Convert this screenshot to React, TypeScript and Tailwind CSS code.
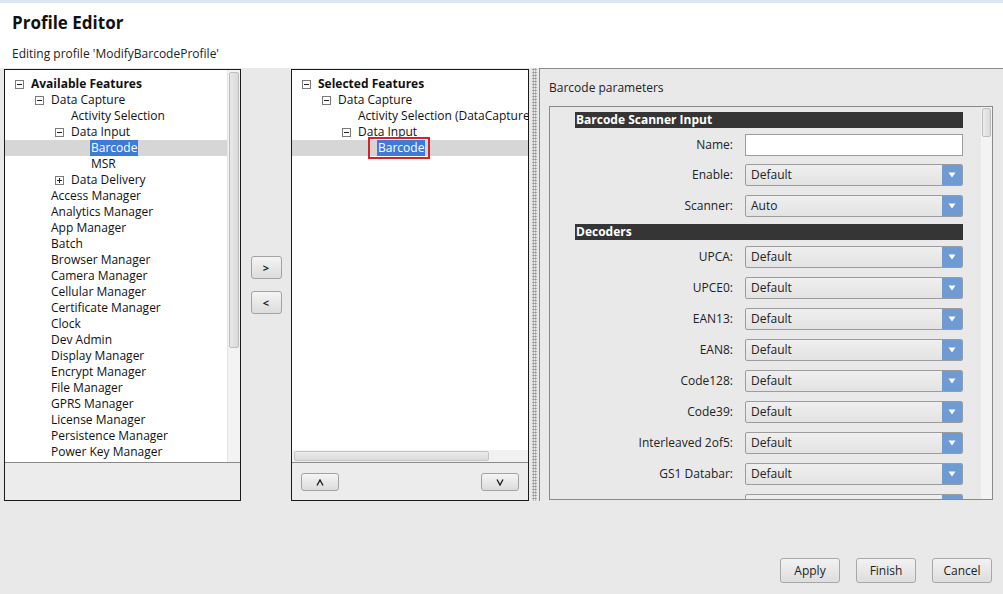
import React from 'react';

type Row = {
    label: string;
    level: number;
    toggle?: 'minus' | 'plus';
    bold?: boolean;
    selected?: boolean;
};

const availableRows: Row[] = [
    { label: 'Available Features', level: 0, toggle: 'minus', bold: true },
    { label: 'Data Capture', level: 1, toggle: 'minus' },
    { label: 'Activity Selection', level: 2 },
    { label: 'Data Input', level: 2, toggle: 'minus' },
    { label: 'Barcode', level: 3, selected: true },
    { label: 'MSR', level: 3 },
    { label: 'Data Delivery', level: 2, toggle: 'plus' },
    ...[
        'Access Manager',
        'Analytics Manager',
        'App Manager',
        'Batch',
        'Browser Manager',
        'Camera Manager',
        'Cellular Manager',
        'Certificate Manager',
        'Clock',
        'Dev Admin',
        'Display Manager',
        'Encrypt Manager',
        'File Manager',
        'GPRS Manager',
        'License Manager',
        'Persistence Manager',
        'Power Key Manager',
    ].map((label) => ({ label, level: 1 })),
];

const selectedRows: Row[] = [
    { label: 'Selected Features', level: 0, toggle: 'minus', bold: true },
    { label: 'Data Capture', level: 1, toggle: 'minus' },
    { label: 'Activity Selection (DataCaptureActivity)', level: 2 },
    { label: 'Data Input', level: 2, toggle: 'minus' },
    { label: 'Barcode', level: 3, selected: true },
];

const decoders = ['UPCA', 'UPCE0', 'EAN13', 'EAN8', 'Code128', 'Code39', 'Interleaved 2of5', 'GS1 Databar'];

const indent = ['pl-[10px]', 'pl-[30px]', 'pl-[50px]', 'pl-[70px]'];

function Toggle({ kind }: { kind: 'minus' | 'plus' }) {
    return (
        <svg width="9" height="9" viewBox="0 0 9 9" className="shrink-0">
            <rect x="0.5" y="0.5" width="8" height="8" fill="white" stroke="#7a7a7a" />
            <path d="M2 4.5h5" stroke="#222" />
            {kind === 'plus' && <path d="M4.5 2v5" stroke="#222" />}
        </svg>
    );
}

function TreeRow({ row, marked }: { row: Row; marked?: boolean }) {
    return (
        <div
            className={`flex h-4 items-center whitespace-nowrap ${indent[row.level]} ${row.selected ? 'bg-[#d6d6d6]' : ''}`}
        >
            <div className="flex w-4 shrink-0 items-center">{row.toggle && <Toggle kind={row.toggle} />}</div>
            <span
                className={`relative leading-4 ${row.bold ? 'font-bold' : ''} ${row.selected ? 'bg-[#3d7bd6] px-px text-white -ml-px' : ''}`}
            >
                {row.label}
                {marked && (
                    <span className="absolute -left-[9px] -right-[5px] -top-[3px] -bottom-[3px] border-2 border-[#d2222c]" />
                )}
            </span>
        </div>
    );
}

function SmallButton({ children, className = '' }: { children: React.ReactNode; className?: string }) {
    return (
        <button
            className={`flex items-center justify-center rounded-[3px] border border-[#a3a3a3] bg-gradient-to-b from-[#f4f4f4] to-[#dcdcdc] text-[11px] font-bold leading-none text-[#222] ${className}`}
        >
            {children}
        </button>
    );
}

function Select({ value }: { value: string }) {
    return (
        <div className="flex h-[22px] w-[218px] items-stretch overflow-hidden rounded-[2px] border border-[#9c9c9c] bg-gradient-to-b from-[#efefef] to-[#e3e3e3]">
            <span className="flex-1 pl-[5px] leading-[20px] text-[#222]">{value}</span>
            <div className="flex w-[20px] items-center justify-center bg-[#6f9bd5]">
                <svg width="8" height="6" viewBox="0 0 8 6">
                    <path d="M0.5 0.5h7L4 5.5z" fill="white" />
                </svg>
            </div>
        </div>
    );
}

function FormRow({ label, children, className = '' }: { label: string; children: React.ReactNode; className?: string }) {
    return (
        <div className={`flex shrink-0 items-center ${className}`}>
            <span className="w-[159px] pr-px text-right text-[#222]">{label}:</span>
            <div className="ml-[11px]">{children}</div>
        </div>
    );
}

function SectionHeader({ title, className = '' }: { title: string; className?: string }) {
    return (
        <div className={`h-4 w-[388px] shrink-0 bg-[#353535] pl-[1px] font-bold leading-4 text-white ${className}`}>
            {title}
        </div>
    );
}

export default function App() {
    return (
        <div className="flex h-[594px] w-[1003px] flex-col overflow-hidden bg-[#e9e9e9] font-['Open_Sans',sans-serif] text-[12px] text-[#111]">
            {/* Title strip */}
            <div className="h-[3px] bg-[#dce6f3]" />
            <div className="flex h-[65px] flex-col bg-white pl-3">
                <h1 className="mt-[9px] text-[17px] font-bold leading-[22px] text-[#111]">Profile Editor</h1>
                <p className="mt-[12px] leading-4 text-[#222]">Editing profile 'ModifyBarcodeProfile'</p>
            </div>

            {/* Main area */}
            <div className="flex h-[433px]">
                {/* Available features */}
                <div className="ml-1 mt-px flex h-[432px] w-[237px] flex-col border border-[#1a1a1a]">
                    <div className="flex h-[393px] border-b border-[#8a8a8a] bg-white">
                        <div className="flex-1 overflow-hidden pt-[6px]">
                            {availableRows.map((r) => (
                                <TreeRow key={r.label} row={r} />
                            ))}
                        </div>
                        <div className="flex w-[13px] flex-col border-l border-[#e4e4e4] bg-[#f3f3f3] px-px pt-[2px]">
                            <div className="h-[276px] rounded-[2px] border border-[#bdbdbd] bg-gradient-to-r from-[#e9e9e9] to-[#d9d9d9]" />
                        </div>
                    </div>
                    <div className="flex-1 bg-[#ececec]" />
                </div>

                {/* Move buttons */}
                <div className="flex w-[50px] flex-col items-center pt-[188px]">
                    <SmallButton className="h-[23px] w-[31px]">&gt;</SmallButton>
                    <SmallButton className="mt-[12px] h-[23px] w-[31px]">&lt;</SmallButton>
                </div>

                {/* Selected features */}
                <div className="mt-px flex h-[432px] w-[238px] flex-col border border-[#1a1a1a]">
                    <div className="flex h-[393px] flex-col border-b border-[#8a8a8a] bg-white">
                        <div className="flex-1 overflow-hidden pt-[6px]">
                            {selectedRows.map((r) => (
                                <TreeRow key={r.label} row={r} marked={r.selected} />
                            ))}
                        </div>
                        <div className="flex h-[12px] items-center bg-[#f1f1f1] px-[2px]">
                            <div className="h-[10px] w-[195px] rounded-[2px] border border-[#c4c4c4] bg-gradient-to-b from-[#ececec] to-[#dadada]" />
                        </div>
                    </div>
                    <div className="flex flex-1 items-start justify-between bg-[#ececec] px-[9px] pt-[10px]">
                        <SmallButton className="h-[18px] w-[38px]">
                            <svg width="8" height="7" viewBox="0 0 8 7">
                                <path d="M1 6.5L4 1l3 5.5" fill="none" stroke="#222" strokeWidth="1.4" />
                            </svg>
                        </SmallButton>
                        <SmallButton className="h-[18px] w-[38px]">
                            <svg width="8" height="7" viewBox="0 0 8 7">
                                <path d="M1 0.5L4 6l3-5.5" fill="none" stroke="#222" strokeWidth="1.4" />
                            </svg>
                        </SmallButton>
                    </div>
                </div>

                {/* Sash */}
                <div className="flex w-[10px] justify-center">
                    <div className="h-full w-[5px] bg-[radial-gradient(#8c8c8c_0.8px,transparent_0.9px)] bg-[length:2.5px_3px]" />
                </div>

                {/* Parameters */}
                <div className="flex min-h-0 flex-1 flex-col border-l border-t border-[#8c8c8c] bg-[#e9e9e9] pb-px pl-[9px] pr-[10px]">
                    <p className="mt-[11px] leading-4 text-[#222]">Barcode parameters</p>
                    <div className="mt-[10px] flex min-h-0 flex-1 overflow-hidden border border-[#8a8a8a]">
                        <div className="flex min-h-0 flex-1 flex-col overflow-hidden pl-[25px] pt-[5px]">
                            <SectionHeader title="Barcode Scanner Input" />
                            <FormRow label="Name" className="mt-[6px]">
                                <div className="h-[22px] w-[218px] border border-[#9c9c9c] bg-white" />
                            </FormRow>
                            <FormRow label="Enable" className="mt-[8px]">
                                <Select value="Default" />
                            </FormRow>
                            <FormRow label="Scanner" className="mt-[9px]">
                                <Select value="Auto" />
                            </FormRow>
                            <SectionHeader title="Decoders" className="mt-[7px]" />
                            {decoders.map((d, i) => (
                                <FormRow key={d} label={d} className={i === 0 ? 'mt-[6px]' : 'mt-[9px]'}>
                                    <Select value="Default" />
                                </FormRow>
                            ))}
                            <div className="mt-[9px] flex shrink-0">
                                <div className="ml-[170px]">
                                    <Select value="" />
                                </div>
                            </div>
                        </div>
                        <div className="w-[11px] bg-[#f3f3f3] px-px pt-px">
                            <div className="h-[29px] rounded-[2px] border border-[#bdbdbd] bg-gradient-to-r from-[#ececec] to-[#dadada]" />
                        </div>
                    </div>
                </div>
            </div>

            {/* Dialog buttons */}
            <div className="flex flex-1 items-start justify-end gap-4 pr-[11px] pt-[57px]">
                {['Apply', 'Finish', 'Cancel'].map((b) => (
                    <button
                        key={b}
                        className="h-[25px] w-[60px] rounded-[3px] border border-[#a8a8a8] bg-gradient-to-b from-[#f2f2f2] to-[#dedede] text-[12px] text-[#222]"
                    >
                        {b}
                    </button>
                ))}
            </div>
        </div>
    );
}
